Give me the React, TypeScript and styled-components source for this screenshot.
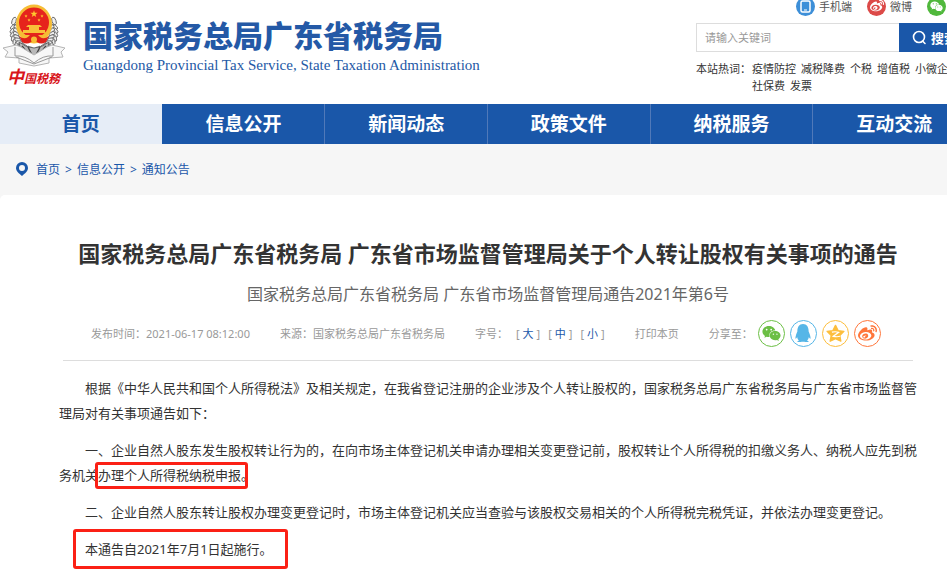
import React from 'react';
import styled, { createGlobalStyle, css } from 'styled-components';
import { FaQq, FaWeibo, FaWeixin } from 'react-icons/fa';

const BLUE = '#1a57a9';
const RED = '#fb2015';

const GlobalStyle = createGlobalStyle`
  * { box-sizing: border-box; }
  body {
    margin: 0;
    overflow: hidden;
    background: #fff;
    color: #333;
    font-family: "Noto Sans", "Noto Sans CJK SC", sans-serif;
    font-size: 12px;
  }
  a { color: inherit; text-decoration: none; }
  button { font: inherit; color: inherit; background: none; border: 0; padding: 0; cursor: pointer; }
  h1, h2, p { margin: 0; }
`;

const Page = styled.div`
  min-width: 976px;
`;

const Header = styled.header`
  display: flex;
  justify-content: space-between;
  height: 104px;
`;

const Brand = styled.a`
  display: flex;
  color: #2459a6;
`;

const Seal = styled.span`
  display: flex;
  flex-direction: column;
  align-items: center;
  width: 67px;
  padding-top: 4px;
`;

const SealText = styled.span`
  margin-top: -2px;
  color: #d8151b;
  font-family: "Noto Sans CJK SC", sans-serif;
  font-size: 12px;
  font-weight: 700;
  font-style: italic;
  line-height: 20px;
  white-space: nowrap;
  &::first-letter { font-size: 17px; }
`;

const BrandNames = styled.span`
  display: flex;
  flex-direction: column;
  gap: 2px;
  padding: 15px 0 0 16px;
`;

const BrandName = styled.span`
  font-family: "Noto Sans CJK SC", sans-serif;
  font-size: 30px;
  font-weight: 900;
  line-height: 38px;
  white-space: nowrap;
`;

const BrandLatin = styled.span`
  font-family: "Liberation Serif", serif;
  font-size: 15px;
  line-height: 20px;
  white-space: nowrap;
`;

const Tools = styled.div`
  width: 280px;
`;

const Channels = styled.div`
  display: flex;
  gap: 15px;
  height: 20px;
  margin: -4px -40px 7px 100px;
`;

const Channel = styled.a`
  display: flex;
  align-items: center;
  gap: 4px;
  color: #555;
  font-size: 11px;
  white-space: nowrap;
`;

const ChannelIcon = styled.span<{ $color: string }>`
  display: grid;
  place-items: center;
  width: 19px;
  height: 19px;
  border-radius: 50%;
  background: ${(p) => p.$color};
  color: #fff;
`;

const Search = styled.form`
  display: flex;
  height: 29px;
`;

const SearchInput = styled.input`
  flex: 1;
  min-width: 0;
  padding: 0 8px;
  border: 1px solid #ddd;
  border-right: 0;
  border-radius: 0;
  font: inherit;
  font-size: 11px;
  outline: 0;
  &::placeholder { color: #999; opacity: 1; }
`;

const SearchButton = styled.button`
  display: flex;
  align-items: center;
  gap: 4px;
  width: 77px;
  padding-left: 13px;
  background: ${BLUE};
  color: #fff;
  font-size: 13px;
  font-weight: 700;
`;

const HotWords = styled.div`
  display: flex;
  padding-top: 8px;
  font-size: 11px;
  line-height: 17px;
`;

const HotLabel = styled.span`
  flex: none;
  width: 56px;
`;

const HotList = styled.div`
  display: flex;
  flex-wrap: wrap;
  column-gap: 5px;
`;

const Nav = styled.nav`
  display: grid;
  grid-template-columns: repeat(6, 1fr);
  background: ${BLUE};
`;

const NavItem = styled.a<{ $active?: boolean }>`
  height: 40px;
  color: #fff;
  font-size: 19px;
  font-weight: 700;
  line-height: 41px;
  text-align: center;
  border-right: 1px solid #5079b9;
  ${(p) => p.$active && css`
    background: #e6edf7;
    border-color: ${BLUE};
    color: ${BLUE};
  `}
`;

const Crumbs = styled.nav`
  display: flex;
  align-items: center;
  gap: 5px;
  height: 51px;
  padding: 0 0 1px 15px;
  background: #f6f6f6;
  color: ${BLUE};
  font-size: 12px;
`;

const Pin = styled.svg`
  width: 14px;
  height: 16px;
  margin-right: 2px;
`;

const ArticleFrame = styled.main`
  background: #f6f6f6;
`;

const Article = styled.article`
  padding: 42px 59px 20px;
  border-radius: 5px 5px 0 0;
  background: #fff;
`;

const Title = styled.h1`
  font-size: 22px;
  font-weight: 700;
  line-height: 32px;
  text-align: center;
`;

const DocNumber = styled.h2`
  margin-top: 13px;
  color: #666;
  font-size: 16px;
  font-weight: 400;
  line-height: 24px;
  text-align: center;
`;

const Meta = styled.div`
  display: flex;
  align-items: center;
  gap: 30px;
  height: 55px;
  margin: 0 4px;
  padding-left: 28px;
  border-bottom: 1px solid #ddd;
  color: #999;
  font-size: 11px;
  white-space: nowrap;
`;

const SizePicker = styled.div`
  display: flex;
  gap: 8px;
`;

const SizeButton = styled.button`
  color: ${BLUE};
  margin: 0 3px;
`;

const Share = styled.div`
  display: flex;
  align-items: center;
  gap: 5px;
`;

const ShareLink = styled.a<{ $color: string }>`
  display: grid;
  place-items: center;
  width: 27px;
  height: 27px;
  border: 1px solid ${(p) => p.$color};
  border-radius: 50%;
  color: ${(p) => p.$color};
`;

const Body = styled.div`
  display: flex;
  flex-direction: column;
  gap: 12px;
  padding-top: 15px;
  font-size: 13px;
  line-height: 25px;
`;

const Paragraph = styled.p`
  text-indent: 2em;
  text-align: justify;
`;

const MarkedText = styled.span`
  position: relative;
  &::after {
    content: "";
    position: absolute;
    inset: -4px -7px -5px -3px;
    border: 3px solid ${RED};
    border-radius: 3px;
  }
`;

const MarkedLine = styled.span`
  position: relative;
  &::after {
    content: "";
    position: absolute;
    inset: -11px -15px -11px -12px;
    border: 3px solid ${RED};
    border-radius: 3px;
  }
`;

const STAR = 'M0 -10 L2.3 -3.2 L9.5 -3.1 L3.8 1.2 L5.9 8.1 L0 4 L-5.9 8.1 L-3.8 1.2 L-9.5 -3.1 L-2.3 -3.2 Z';

function Emblem() {
  const ears = Array.from({ length: 10 }, (_, i) => 76 + i * 10);
  return (
    <svg width="64" height="64" viewBox="0 0 64 64" aria-hidden="true">
      <g fill="#f0f0f0" stroke="#6a6a6a" strokeWidth="0.9">
        {ears.map((angle) => (
          <g key={angle}>
            <ellipse cx="32" cy="7" rx="2" ry="3.6" transform={`rotate(${angle} 32 28) rotate(48 32 7)`} />
            <ellipse cx="32" cy="10" rx="1.8" ry="3.2" transform={`rotate(${angle} 32 28) rotate(-42 32 10)`} />
            <ellipse cx="32" cy="7" rx="2" ry="3.6" transform={`rotate(${-angle} 32 28) rotate(-48 32 7)`} />
            <ellipse cx="32" cy="10" rx="1.8" ry="3.2" transform={`rotate(${-angle} 32 28) rotate(42 32 10)`} />
          </g>
        ))}
        <ellipse cx="12" cy="17" rx="2" ry="4" transform="rotate(20 12 17)" />
        <ellipse cx="52" cy="17" rx="2" ry="4" transform="rotate(-20 52 17)" />
      </g>
      <path d="M17 38 Q32 50 47 38 L45 48 Q32 55 19 48Z" fill="#b9b9b9" stroke="#666" />
      <path d="M20 42l6 7M26 43l4 8M44 42l-6 7M38 43l-4 8" stroke="#444" strokeWidth="1.4" />
      <ellipse cx="32" cy="20" rx="18" ry="19.500" fill="#f6bd35" />
      <ellipse cx="32" cy="18.500" rx="15" ry="15" fill="#e6231c" />
      <path d={STAR} transform="translate(32 10) scale(.38)" fill="#ffc72e" />
      {[[24, 12], [27, 16], [37, 16], [40, 12]].map(([x, y]) => (
        <path key={x} d={STAR} transform={`translate(${x} ${y}) scale(.17)`} fill="#ffc72e" />
      ))}
      <path d="M26 21h12l2 2h-3v3h6v3H21v-3h6v-3h-3z" fill="#f8c139" />
      <path d="M19 31h26l-3 5H22z" fill="#f6bd35" />
      <path d="M17 32q5 4 9 1l2-2h8l2 2q4 3 9-1l-3 6q-5 3-9 0l-3-2-3 2q-4 3-9 0z" fill="#df211b" />
      <circle cx="32" cy="35.500" r="3" fill="#f6bd35" />
      <path d="M1 44l13-3 5 2 13 8 13-8 5-2 13 3-4 4 2 5-14 1v5l-15 3-15-3v-5L3 53l3-5z" fill="#f7f7f7" stroke="#b5b5b5" />
      <path d="M13 43v9q10-1 19 7 9-8 19-7v-9M14 53l18 7 18-7" fill="none" stroke="#999" />
    </svg>
  );
}

function QzoneStar() {
  return (
    <svg width="19" height="19" viewBox="-10.5 -11 21 21" aria-hidden="true">
      <path
        d="M0 -9.5 L3 -3.6 L9.300 -2.900 L4.700 1.600 L5.900 8 L0 5.200 L-5.900 8 L-4.700 1.600 L-9.300 -2.900 L-3 -3.600 Z"
        fill="currentColor"
        stroke="currentColor"
        strokeWidth="1.5"
        strokeLinejoin="round"
      />
      <path d="M-4 -2 Q0 -3 3.5 -1.8 L-2.5 2.6 Q2 3.6 5 2.6" fill="none" stroke="#fff" strokeWidth="1.3" />
    </svg>
  );
}

const hotWords = ['疫情防控', '减税降费', '个税', '增值税', '小微企业', '社保费', '发票'];
const navItems = ['首页', '信息公开', '新闻动态', '政策文件', '纳税服务', '互动交流'];
const crumbs = ['首页', '信息公开', '通知公告'];

export default function App() {
  return (
    <>
      <GlobalStyle />
      <Page>
        <Header>
          <Brand href="#">
            <Seal>
              <Emblem />
              <SealText>中国税務</SealText>
            </Seal>
            <BrandNames>
              <BrandName>国家税务总局广东省税务局</BrandName>
              <BrandLatin>Guangdong Provincial Tax Service, State Taxation Administration</BrandLatin>
            </BrandNames>
          </Brand>
          <Tools>
            <Channels>
              <Channel href="#">
                <ChannelIcon $color="#3d8fd8">
                  <svg width="11" height="13" viewBox="0 0 11 13" aria-hidden="true">
                    <rect x="1" y="1" width="9" height="11" rx="1.5" fill="none" stroke="#fff" strokeWidth="1.5" />
                    <path d="M4 10h3" stroke="#fff" />
                  </svg>
                </ChannelIcon>
                手机端
              </Channel>
              <Channel href="#">
                <ChannelIcon $color="#dc4a48"><FaWeibo size={14} /></ChannelIcon>
                微博
              </Channel>
              <Channel href="#">
                <ChannelIcon $color="#50b83c"><FaWeixin size={13} /></ChannelIcon>
                微信
              </Channel>
            </Channels>
            <Search onSubmit={(e) => e.preventDefault()}>
              <SearchInput type="text" aria-label="搜索关键词" placeholder="请输入关键词" />
              <SearchButton type="submit">
                <svg width="15" height="15" viewBox="0 0 15 15" fill="none" stroke="#fff" strokeWidth="1.6" aria-hidden="true">
                  <circle cx="7" cy="7" r="5.5" />
                  <path d="M10.5 11l2.5 2.5" strokeLinecap="round" />
                </svg>
                搜索
              </SearchButton>
            </Search>
            <HotWords>
              <HotLabel>本站热词：</HotLabel>
              <HotList>
                {hotWords.map((word) => <a key={word} href="#">{word}</a>)}
              </HotList>
            </HotWords>
          </Tools>
        </Header>

        <Nav>
          {navItems.map((item, i) => <NavItem key={item} href="#" $active={i === 0}>{item}</NavItem>)}
        </Nav>

        <Crumbs aria-label="当前位置">
          <Pin viewBox="0 0 14 16" aria-hidden="true">
            <path fillRule="evenodd" fill={BLUE} d="M7 1a6 6 0 0 1 6 6c0 3-3 5.500-6 8-3-2.500-6-5-6-8a6 6 0 0 1 6-6zm0 3a3 3 0 1 0 0 6 3 3 0 0 0 0-6z" />
          </Pin>
          {crumbs.map((crumb, i) => (
            <React.Fragment key={crumb}>
              {i > 0 && <span>&gt;</span>}
              <a href="#">{crumb}</a>
            </React.Fragment>
          ))}
        </Crumbs>

        <ArticleFrame>
          <Article>
            <Title>国家税务总局广东省税务局 广东省市场监督管理局关于个人转让股权有关事项的通告</Title>
            <DocNumber>国家税务总局广东省税务局 广东省市场监督管理局通告2021年第6号</DocNumber>
            <Meta>
              <span>发布时间：2021-06-17 08:12:00</span>
              <span>来源：国家税务总局广东省税务局</span>
              <SizePicker>
                <span>字号：</span>
                {['大', '中', '小'].map((size) => (
                  <span key={size}>[<SizeButton type="button">{size}</SizeButton>]</span>
                ))}
              </SizePicker>
              <button type="button">打印本页</button>
              <Share>
                <span>分享至：</span>
                <ShareLink href="#" $color="#6cbf45" aria-label="微信"><FaWeixin size={19} /></ShareLink>
                <ShareLink href="#" $color="#56b6e7" aria-label="QQ"><FaQq size={18} /></ShareLink>
                <ShareLink href="#" $color="#fdbe3d" aria-label="QQ空间"><QzoneStar /></ShareLink>
                <ShareLink href="#" $color="#ff763b" aria-label="微博"><FaWeibo size={19} /></ShareLink>
              </Share>
            </Meta>
            <Body>
              <Paragraph>
                根据《中华人民共和国个人所得税法》及相关规定，在我省登记注册的企业涉及个人转让股权的，国家税务总局广东省税务局与广东省市场监督管理局对有关事项通告如下：
              </Paragraph>
              <Paragraph>
                一、企业自然人股东发生股权转让行为的，在向市场主体登记机关申请办理相关变更登记前，股权转让个人所得税的扣缴义务人、纳税人应先到税务机关<MarkedText>办理个人所得税纳税申报</MarkedText>。
              </Paragraph>
              <Paragraph>
                二、企业自然人股东转让股权办理变更登记时，市场主体登记机关应当查验与该股权交易相关的个人所得税完税凭证，并依法办理变更登记。
              </Paragraph>
              <Paragraph>
                <MarkedLine>本通告自2021年7月1日起施行。</MarkedLine>
              </Paragraph>
            </Body>
          </Article>
        </ArticleFrame>
      </Page>
    </>
  );
}
